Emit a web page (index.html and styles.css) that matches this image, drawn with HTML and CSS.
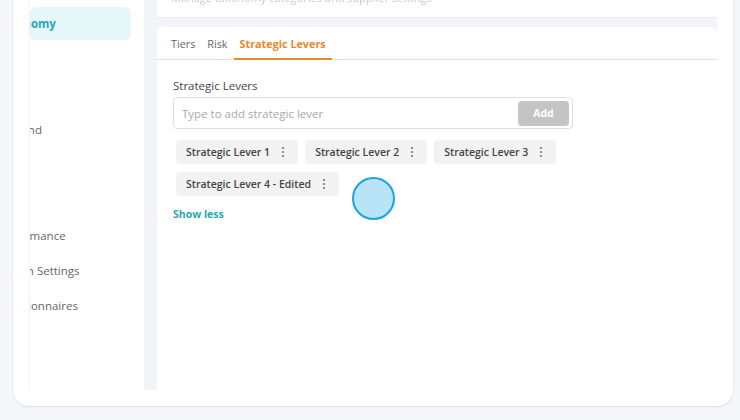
FILE: index.html
```html
<!DOCTYPE html>
<html lang="en">
<head>
    <meta charset="UTF-8">
    <meta name="viewport" content="width=device-width, initial-scale=1.0">
    <title>Settings - Strategic Levers</title>
    <link rel="stylesheet" href="styles.css">
</head>
<body>
    <div class="shell">
        <div class="sidebar">
            <div class="nav-item active"><span>Taxonomy</span></div>
            <div class="nav-item"><span>Users</span></div>
            <div class="nav-item"><span>Roles</span></div>
            <div class="nav-item"><span>Demand</span></div>
            <div class="nav-item"><span>Tags</span></div>
            <div class="nav-item"><span>Units</span></div>
            <div class="nav-item"><span>Performance</span></div>
            <div class="nav-item"><span class="short">Admin Settings</span></div>
            <div class="nav-item"><span>Questionnaires</span></div>
        </div>

        <div class="main">
            <div class="top-card">
                <div class="top-text">Manage taxonomy categories and supplier settings</div>
            </div>

            <div class="tab-card">
                <div class="tabs">
                    <div class="tab">Tiers</div>
                    <div class="tab">Risk</div>
                    <div class="tab active">Strategic Levers</div>
                </div>

                <div class="tab-body">
                    <div class="field-label">Strategic Levers</div>
                    <div class="input-row">
                        <div class="placeholder">Type to add strategic lever</div>
                        <button class="add-btn">Add</button>
                    </div>

                    <div class="chips">
                        <div class="chip">Strategic Lever 1 <svg class="kebab" viewBox="0 0 4 12"><circle cx="2" cy="2" r="1.1"/><circle cx="2" cy="6" r="1.1"/><circle cx="2" cy="10" r="1.1"/></svg></div>
                        <div class="chip">Strategic Lever 2 <svg class="kebab" viewBox="0 0 4 12"><circle cx="2" cy="2" r="1.1"/><circle cx="2" cy="6" r="1.1"/><circle cx="2" cy="10" r="1.1"/></svg></div>
                        <div class="chip">Strategic Lever 3 <svg class="kebab" viewBox="0 0 4 12"><circle cx="2" cy="2" r="1.1"/><circle cx="2" cy="6" r="1.1"/><circle cx="2" cy="10" r="1.1"/></svg></div>
                        <div class="chip">Strategic Lever 4 - Edited <svg class="kebab" viewBox="0 0 4 12"><circle cx="2" cy="2" r="1.1"/><circle cx="2" cy="6" r="1.1"/><circle cx="2" cy="10" r="1.1"/></svg></div>
                    </div>

                    <div class="show-less">Show less</div>
                </div>
            </div>
        </div>
    </div>

    <div class="touch"></div>
</body>
</html>
```

FILE: styles.css
```css
* {
    margin: 0;
    padding: 0;
    box-sizing: border-box;
}

body {
    font-family: 'Open Sans', 'Noto Sans', sans-serif;
    background: #f5f6f9;
    color: #444;
    width: 740px;
    height: 420px;
    overflow: hidden;
    position: relative;
}

.shell {
    margin-left: 13px;
    width: 720px;
    height: 406px;
    background: #fff;
    border-radius: 0 0 16px 16px;
    box-shadow: 0 1px 2px rgba(0, 0, 0, 0.08), 0 0 0 1px #eef0f3;
    padding: 0 16px 16px 16px;
    display: flex;
}

.sidebar {
    width: 115px;
    border-left: 1px solid #f2f3f6;
    padding-top: 7px;
    display: flex;
    flex-direction: column;
    gap: 2.25px;
}

.nav-item {
    height: 33px;
    margin-right: 13px;
    border-radius: 6px;
    overflow: hidden;
    display: flex;
    align-items: center;
    white-space: nowrap;
    font-size: 11.5px;
    color: #666;
}

.nav-item span {
    margin-left: -34px;
}

.nav-item span.short {
    margin-left: -31px;
}

.nav-item.active {
    background: #e6f7f9;
    color: #2aa6b2;
    font-weight: 700;
}

.main {
    width: 573px;
    background: #f3f4f7;
    padding-left: 13px;
    display: flex;
    flex-direction: column;
    gap: 10px;
}

.top-card {
    height: 17px;
    background: #fff;
    overflow: hidden;
    box-shadow: 0 1px 2px rgba(0, 0, 0, 0.03);
}

.top-text {
    margin: -10px 0 0 14px;
    font-size: 11px;
    color: #c9cbcf;
    filter: blur(0.6px);
}

.tab-card {
    flex: 1;
    background: #fff;
    border-radius: 6px 6px 0 0;
}

.tabs {
    height: 33px;
    padding-left: 8px;
    border-bottom: 1px solid #e0e0e0;
    display: flex;
}

.tab {
    padding: 0 6px;
    font-size: 10.8px;
    color: #666;
    display: flex;
    align-items: center;
    padding-top: 1px;
}

.tab.active {
    color: #e8892c;
    font-weight: 700;
    border-bottom: 2px solid #e8892c;
    margin-bottom: -1px;
}

.tab-body {
    padding: 17px 16px 0 16px;
}

.field-label {
    font-size: 11.5px;
    color: #444;
    line-height: 17px;
    margin-bottom: 3px;
}

.input-row {
    width: 400px;
    height: 32px;
    border: 1px solid #dedede;
    border-radius: 4px;
    display: flex;
    align-items: center;
    justify-content: space-between;
    padding: 0 3px 0 8px;
}

.placeholder {
    font-size: 11.5px;
    color: #a8a8a8;
}

.add-btn {
    width: 51px;
    height: 25px;
    border: none;
    border-radius: 4px;
    background: #c4c4c4;
    color: #fff;
    font-family: inherit;
    font-size: 10.5px;
    font-weight: 700;
}

.chips {
    margin: 11px 0 0 3px;
    width: 390px;
    display: flex;
    flex-wrap: wrap;
    gap: 8px 7px;
}

.chip {
    height: 24px;
    background: #f2f2f2;
    border-radius: 4px;
    padding: 0 13px 0 10px;
    display: flex;
    align-items: center;
    gap: 11px;
    font-size: 10.5px;
    font-weight: 600;
    color: #444;
}

.kebab {
    width: 4px;
    height: 12px;
    fill: #777;
}

.show-less {
    margin-top: 11px;
    font-size: 10.5px;
    font-weight: 700;
    color: #2aa6b2;
}

.touch {
    position: absolute;
    left: 352px;
    top: 177px;
    width: 43px;
    height: 43px;
    border-radius: 50%;
    background: #b9e4f7;
    border: 2px solid #1ba3e6;
}
```
